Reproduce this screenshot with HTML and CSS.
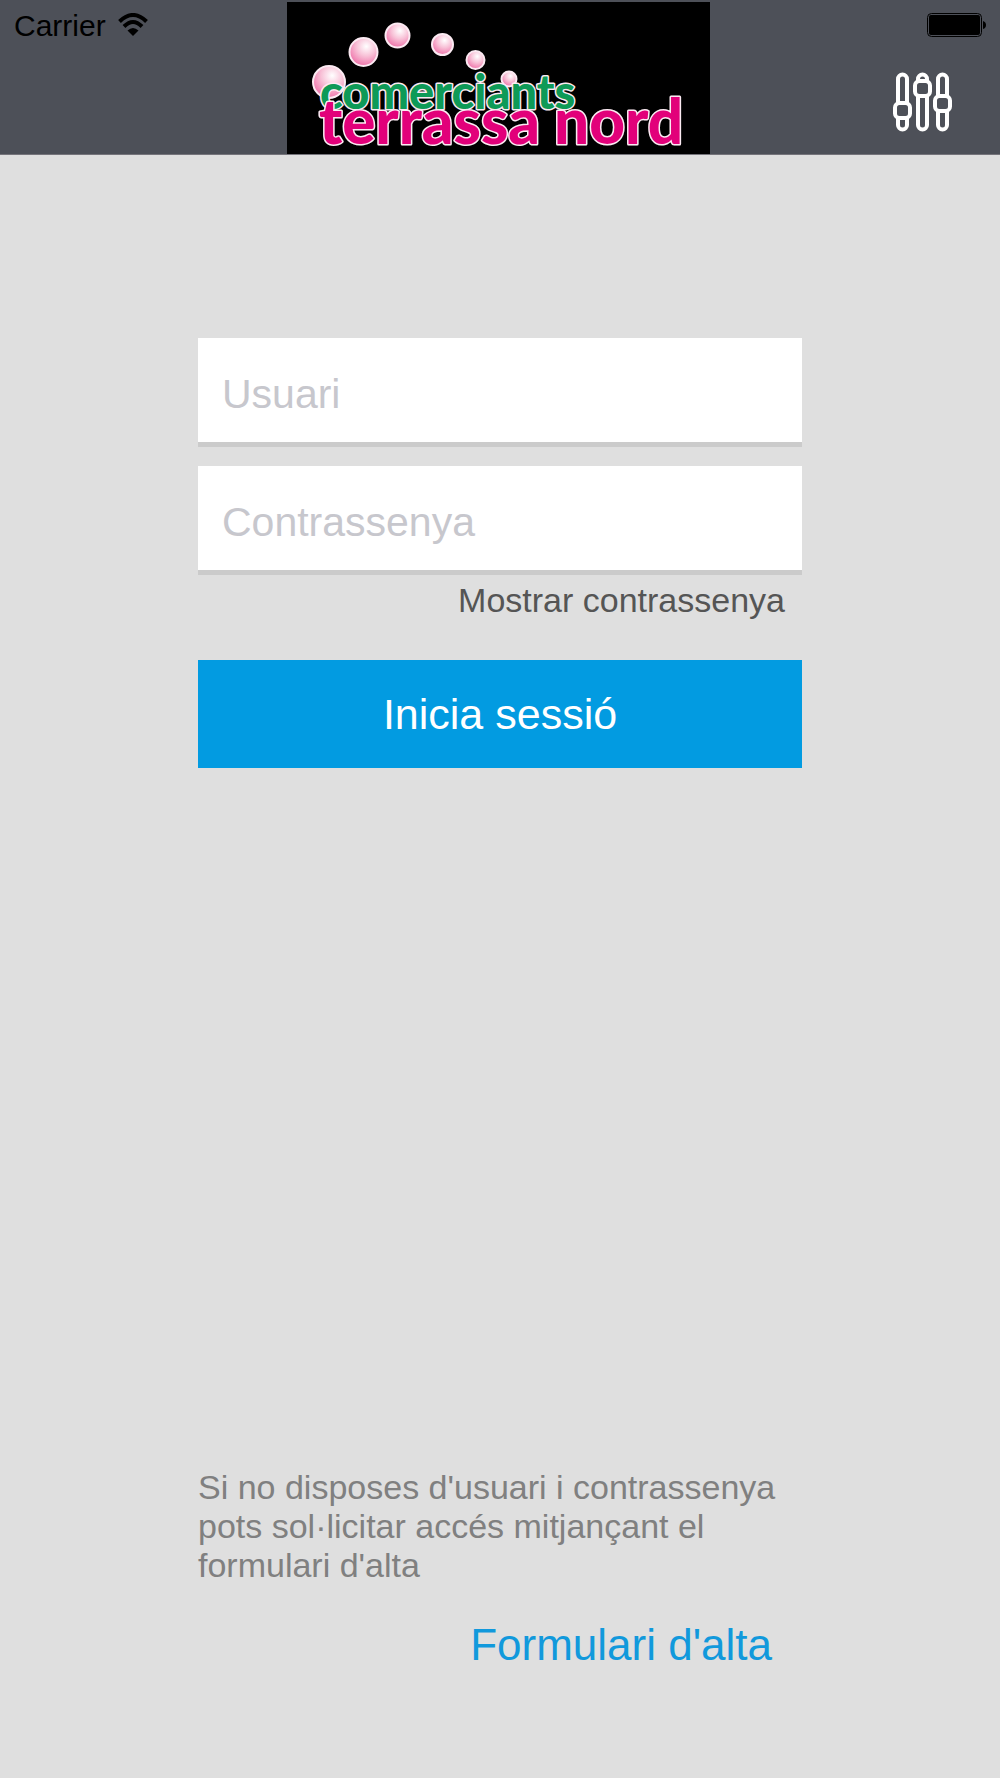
FILE: index.html
```html
<!DOCTYPE html>
<html lang="ca">
<head>
<meta charset="utf-8">
<meta name="viewport" content="width=device-width, initial-scale=1">
<title>Comerciants Terrassa Nord</title>
<link rel="stylesheet" href="styles.css">
</head>
<body>
<header class="header">
  <div class="status">
    <span>Carrier</span>
    <svg class="wifi" width="30" height="24" viewBox="0 0 30 24" aria-hidden="true">
      <g fill="none" stroke="#000" stroke-width="4">
        <path d="M1.500 8.500Q15-4.500 28.500 8.500"/>
        <path d="M6 13.500Q15 4.500 24 13.500"/>
      </g>
      <path d="M9.500 17.500Q15 12.500 20.500 17.500L15 23Z"/>
    </svg>
  </div>
  <svg class="logo" width="423" height="152" viewBox="287 2 423 152" role="img" aria-label="Comerciants Terrassa Nord">
    <defs>
      <radialGradient id="pearl" cx=".6" cy=".3" r=".75">
        <stop offset="0" stop-color="#fff"/>
        <stop offset=".45" stop-color="#f8c3d8"/>
        <stop offset="1" stop-color="#ee6ba5"/>
      </radialGradient>
    </defs>
    <rect x="287" y="2" width="423" height="152"/>
    <g fill="url(#pearl)" stroke="#fbeaf2" stroke-width="2">
      <circle cx="329" cy="82" r="16"/>
      <circle cx="363.500" cy="52" r="14"/>
      <circle cx="397.500" cy="35.500" r="12"/>
      <circle cx="442.500" cy="44.500" r="10.500"/>
      <circle cx="475.500" cy="60" r="9"/>
      <circle cx="509" cy="79" r="7.500"/>
    </g>
    <g class="logo-text">
      <text class="logo-green" x="320" y="109">comerciants</text>
      <text class="logo-pink" x="319" y="144">terrassa</text>
      <text class="logo-pink" x="554" y="144">nord</text>
    </g>
  </svg>
  <div class="tools">
    <svg class="battery" width="60" height="24" viewBox="0 0 60 24" aria-hidden="true">
      <rect x=".5" y=".5" width="54" height="23" rx="4" fill="none" stroke="#000"/>
      <rect x="2" y="2" width="51" height="20" rx="2"/>
      <path d="M56 8Q59 9 59 12T56 16Z"/>
    </svg>
    <button class="settings" type="button" aria-label="Configuració">
      <svg width="60" height="60" viewBox="0 0 60 60" fill="none" stroke="#fff" stroke-width="4">
        <path d="M5 31V7a4.500 4.500 0 0 1 9 0v24M5 46v7a4.500 4.500 0 0 0 9 0v-7"/>
        <rect x="2" y="31" width="15" height="15" rx="4.500"/>
        <path d="M25 9V7a4.500 4.500 0 0 1 9 0v2M25 24v29a4.500 4.500 0 0 0 9 0V24"/>
        <rect x="22" y="9" width="15" height="15" rx="4.500"/>
        <path d="M45 24V7a4.500 4.500 0 0 1 9 0v17M45 39v14a4.500 4.500 0 0 0 9 0V39"/>
        <rect x="42" y="24" width="15" height="15" rx="4.500"/>
      </svg>
    </button>
  </div>
</header>
<main class="content">
  <form class="login">
    <input class="field" type="text" name="usuari" aria-label="Usuari" placeholder="Usuari">
    <input class="field" type="password" name="contrassenya" aria-label="Contrassenya" placeholder="Contrassenya">
    <button class="reveal" type="button">Mostrar contrassenya</button>
    <button class="submit" type="submit">Inicia sessió</button>
  </form>
  <section class="signup">
    <p class="hint">Si no disposes d'usuari i contrassenya pots sol·licitar accés mitjançant el formulari d'alta</p>
    <a class="signup-link" href="#alta">Formulari d'alta</a>
  </section>
</main>
</body>
</html>
```
FILE: styles.css
```css
* {
  box-sizing: border-box;
}

body {
  margin: 0;
  min-height: 100vh;
  display: flex;
  flex-direction: column;
  background: #dfdfdf;
  font-family: "Liberation Sans", Arial, sans-serif;
}

button,
input {
  margin: 0;
  border: 0;
  border-radius: 0;
  font-family: inherit;
}

button {
  padding: 0;
  background: none;
  cursor: pointer;
}

.header {
  display: grid;
  grid-template-columns: 1fr auto 1fr;
  padding: 2px 3px 0 0;
  background: #4d5058;
  border-bottom: 1px solid #75747b;
}

.logo {
  display: block;
  overflow: visible;
}

.logo-text {
  font-family: Lato, sans-serif;
  font-weight: 900;
  stroke: #fbeaf2;
  stroke-width: 3px;
  stroke-linejoin: round;
  paint-order: stroke;
}

.logo-green {
  font-size: 47px;
  fill: #0e9a57;
}

.logo-pink {
  font-size: 62px;
  fill: #e2007a;
}

.status {
  display: flex;
  align-items: flex-start;
  gap: 12px;
  padding: 7px 0 0 14px;
  font-size: 30px;
  line-height: 34px;
}

.wifi {
  margin-top: 4px;
}

.tools {
  display: flex;
  flex-direction: column;
  align-items: flex-end;
  gap: 35px;
  padding: 11px 10px 0 0;
}

.settings {
  margin-right: 34px;
}

.settings svg,
.battery {
  display: block;
}

.content {
  flex: 1;
  display: flex;
  flex-direction: column;
  justify-content: space-between;
  gap: 80px;
  width: 60.4%;
  margin: 0 auto;
  padding: 183px 0 108px;
}

.login {
  display: flex;
  flex-direction: column;
}

.field {
  width: 100%;
  height: 109px;
  margin-bottom: 19px;
  padding: 8px 24px 0;
  background: #fff;
  border-bottom: 5px solid #cbcbcb;
  font-size: 41px;
  color: #555;
}

.field + .field {
  margin-bottom: 5px;
}

.field::placeholder {
  color: #c7c7cd;
  opacity: 1;
}

.reveal {
  align-self: flex-end;
  margin: 0 17px 40px 0;
  font-size: 34px;
  line-height: 40px;
  color: #555;
}

.submit {
  height: 108px;
  background: #029be1;
  font-size: 43px;
  color: #fff;
}

.signup {
  display: flex;
  flex-direction: column;
}

.hint {
  margin: 0 0 35px;
  font-size: 34px;
  line-height: 39px;
  color: #808080;
}

.signup-link {
  align-self: flex-end;
  margin-right: 30px;
  font-size: 44px;
  line-height: 50px;
  color: #1199dc;
  text-decoration: none;
}
```
